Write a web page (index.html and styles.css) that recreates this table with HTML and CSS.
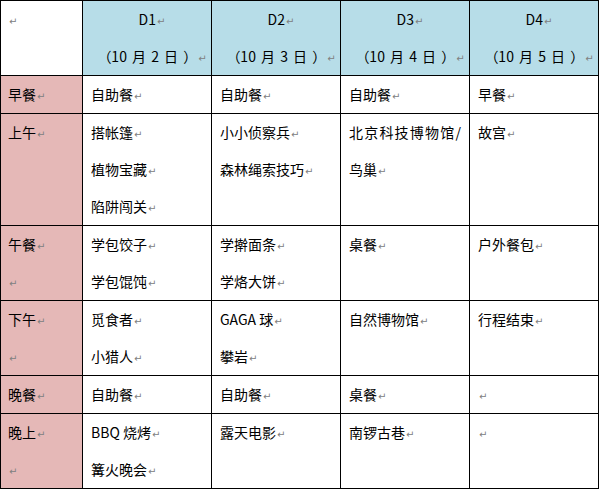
FILE: index.html
```html
<!DOCTYPE html>
<html lang="zh-CN">
<head>
<meta charset="utf-8">
<title>行程表</title>
<link rel="stylesheet" href="styles.css">
</head>
<body>
<div class="sheet" role="table">
  <div class="cell corner"><span class="pm">↵</span></div>
  <div class="cell head">D1<span class="pm">↵</span><br><span class="date">（10 月 2 日 ）</span><span class="pm">↵</span></div>
  <div class="cell head">D2<span class="pm">↵</span><br><span class="date">（10 月 3 日 ）</span><span class="pm">↵</span></div>
  <div class="cell head">D3<span class="pm">↵</span><br><span class="date">（10 月 4 日 ）</span><span class="pm">↵</span></div>
  <div class="cell head">D4<span class="pm">↵</span><br><span class="date">（10 月 5 日 ）</span><span class="pm">↵</span></div>

  <div class="cell side">早餐<span class="pm">↵</span></div>
  <div class="cell">自助餐<span class="pm">↵</span></div>
  <div class="cell">自助餐<span class="pm">↵</span></div>
  <div class="cell">自助餐<span class="pm">↵</span></div>
  <div class="cell">早餐<span class="pm">↵</span></div>

  <div class="cell side">上午<span class="pm">↵</span></div>
  <div class="cell">搭帐篷<span class="pm">↵</span><br>植物宝藏<span class="pm">↵</span><br>陷阱闯关<span class="pm">↵</span></div>
  <div class="cell">小小侦察兵<span class="pm">↵</span><br>森林绳索技巧<span class="pm">↵</span></div>
  <div class="cell"><span class="spread">北京科技博物馆/</span><br>鸟巢<span class="pm">↵</span></div>
  <div class="cell">故宫<span class="pm">↵</span></div>

  <div class="cell side">午餐<span class="pm">↵</span><br><span class="pm">↵</span></div>
  <div class="cell">学包饺子<span class="pm">↵</span><br>学包馄饨<span class="pm">↵</span></div>
  <div class="cell">学擀面条<span class="pm">↵</span><br>学烙大饼<span class="pm">↵</span></div>
  <div class="cell">桌餐<span class="pm">↵</span></div>
  <div class="cell">户外餐包<span class="pm">↵</span></div>

  <div class="cell side">下午<span class="pm">↵</span><br><span class="pm">↵</span></div>
  <div class="cell">觅食者<span class="pm">↵</span><br>小猎人<span class="pm">↵</span></div>
  <div class="cell">GAGA 球<span class="pm">↵</span><br>攀岩<span class="pm">↵</span></div>
  <div class="cell">自然博物馆<span class="pm">↵</span></div>
  <div class="cell">行程结束<span class="pm">↵</span></div>

  <div class="cell side">晚餐<span class="pm">↵</span></div>
  <div class="cell">自助餐<span class="pm">↵</span></div>
  <div class="cell">自助餐<span class="pm">↵</span></div>
  <div class="cell">桌餐<span class="pm">↵</span></div>
  <div class="cell"><span class="pm">↵</span></div>

  <div class="cell side">晚上<span class="pm">↵</span><br><span class="pm">↵</span></div>
  <div class="cell">BBQ 烧烤<span class="pm">↵</span><br>篝火晚会<span class="pm">↵</span></div>
  <div class="cell">露天电影<span class="pm">↵</span></div>
  <div class="cell">南锣古巷<span class="pm">↵</span></div>
  <div class="cell"><span class="pm">↵</span></div>
</div>
</body>
</html>
```
FILE: styles.css
```css
html, body {
  margin: 0;
  padding: 0;
  background: #ffffff;
}

.sheet {
  display: grid;
  grid-template-columns: 81px repeat(4, 128px);
  gap: 1px;
  padding: 1px;
  background: #000000;
  width: max-content;
  font-family: "Noto Sans CJK SC", "Noto Sans", sans-serif;
  font-size: 14px;
  line-height: 37px;
  color: #000000;
}

.cell {
  background: #ffffff;
  padding: 0 4px 0 8px;
  white-space: nowrap;
  overflow: hidden;
}

.corner {
  padding-left: 7px;
}

.head {
  background: #b7dde8;
  text-align: center;
  padding: 0 0 0 10px;
}

.date {
  word-spacing: 2px;
}

.side {
  background: #e5b8b7;
  padding-left: 7px;
}

.spread {
  letter-spacing: 1.2px;
}

.pm {
  font-family: "DejaVu Sans", sans-serif;
  font-size: 10px;
  line-height: 0;
  color: #808080;
  margin-left: 1px;
}
```
